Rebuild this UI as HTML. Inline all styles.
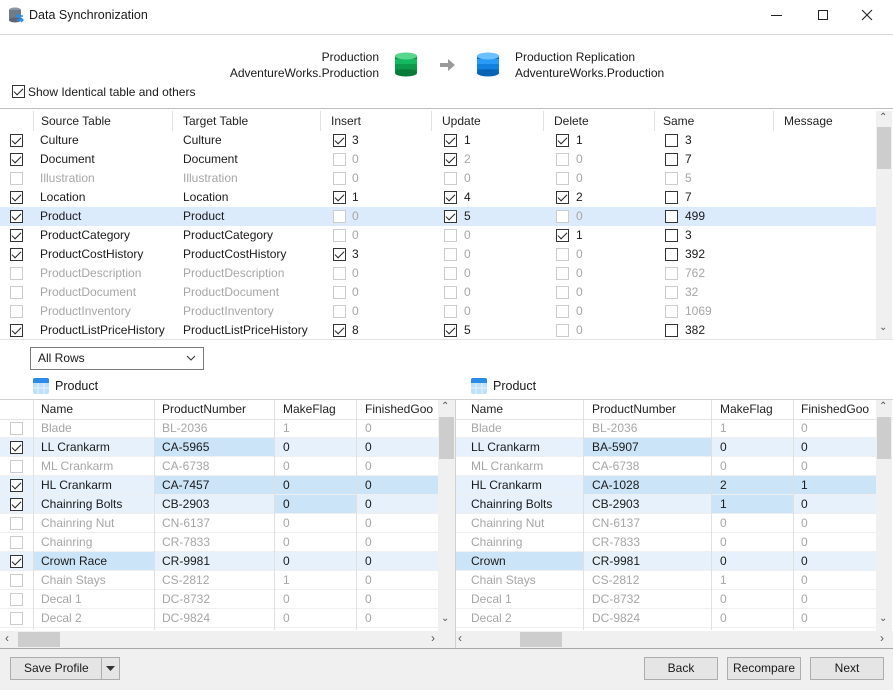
<!DOCTYPE html>
<html><head><meta charset="utf-8"><style>
*{margin:0;padding:0;box-sizing:border-box}
body{width:893px;height:690px;position:relative;overflow:hidden;background:#fff;font:12px "Liberation Sans",sans-serif;color:#1a1a1a}
.a{position:absolute;white-space:nowrap}
.k{position:absolute;width:13px;height:13px;border:1px solid #333;background:#fff;display:block}
.k.g{border-color:#ccc}
.k.c::after{content:"";position:absolute;left:3px;top:0px;width:4px;height:8px;border-right:1px solid #222;border-bottom:1px solid #222;transform:rotate(45deg)}
.row{position:absolute;left:0;height:19px;width:100%}
.row span{position:absolute;top:2px;white-space:nowrap}
.row .k{top:3px}
.gr{color:#a6a6a6}
.hd span{color:#222}
.vs{position:absolute;background:#e0e0e0;width:1px}
.btn{position:absolute;height:23px;border:1px solid #adadad;background:#e5e5e5;text-align:center;line-height:21px}
.hl{position:absolute;height:19px;background:#e6f1fc}
.hd2{position:absolute;height:19px;background:#cce4f7}
.hz{position:absolute;height:1px;background:#efefef}
</style></head><body>
<!-- title bar -->
<svg class="a" style="left:8px;top:7px" width="16" height="16" viewBox="0 0 16 16"><ellipse cx="7" cy="3" rx="6" ry="2.5" fill="#8a96a3"/><rect x="1" y="3" width="12" height="10" fill="#6f7b88"/><ellipse cx="7" cy="13" rx="6" ry="2.5" fill="#5c6773"/><path d="M9 9h6M11 7l-2 2 2 2M15 13H9M13 11l2 2-2 2" stroke="#1e90ff" stroke-width="1.5" fill="none"/></svg>
<div class="a" style="left:29px;top:8px;font-size:12.5px">Data Synchronization</div>
<div class="a" style="left:771px;top:15px;width:11px;height:1px;background:#222"></div>
<div class="a" style="left:818px;top:10px;width:10px;height:10px;border:1px solid #222"></div>
<svg class="a" style="left:861px;top:9px" width="12" height="12"><path d="M1 1L11 11M11 1L1 11" stroke="#222" stroke-width="1.1"/></svg>
<div class="a" style="left:0;top:34px;width:893px;height:1px;background:#d9d9d9"></div>
<!-- header -->
<div class="a" style="left:200px;top:49px;width:179px;text-align:right;line-height:16px">Production<br>AdventureWorks.Production</div>
<svg class="a" style="left:395px;top:52px" width="22" height="25" viewBox="0 0 22 25"><rect x="0" y="4" width="22" height="17" fill="#0a8a43"/><ellipse cx="11" cy="21" rx="11" ry="3.5" fill="#087a3a"/><rect x="0" y="12" width="22" height="5" fill="#0c9a4b"/><rect x="0" y="7" width="22" height="5" fill="#14b85f"/><ellipse cx="11" cy="4" rx="11" ry="3.5" fill="#56d68f"/></svg>
<svg class="a" style="left:440px;top:58px" width="16" height="14"><path d="M0 5h8V1l7 6-7 6V9H0z" fill="#9a9a9a"/></svg>
<svg class="a" style="left:477px;top:52px" width="22" height="25" viewBox="0 0 22 25"><rect x="0" y="4" width="22" height="17" fill="#0b6fc8"/><ellipse cx="11" cy="21" rx="11" ry="3.5" fill="#0a62b4"/><rect x="0" y="12" width="22" height="5" fill="#1281e0"/><rect x="0" y="7" width="22" height="5" fill="#2a9af5"/><ellipse cx="11" cy="4" rx="11" ry="3.5" fill="#6cc0ff"/></svg>
<div class="a" style="left:515px;top:49px;line-height:16px">Production Replication<br>AdventureWorks.Production</div>
<i class="k c" style="left:12px;top:85px"></i>
<div class="a" style="left:28px;top:85px">Show Identical table and others</div>
<!-- upper grid -->
<div class="a" style="left:0;top:108px;width:893px;height:1px;background:#bdbdbd"></div>
<div class="a" style="left:0;top:207px;width:876px;height:19px;background:#dcebfc"></div>
<div class="vs" style="left:33px;top:111px;height:20px"></div>
<div class="vs" style="left:172px;top:111px;height:20px"></div>
<div class="vs" style="left:320px;top:111px;height:20px"></div>
<div class="vs" style="left:431px;top:111px;height:20px"></div>
<div class="vs" style="left:543px;top:111px;height:20px"></div>
<div class="vs" style="left:654px;top:111px;height:20px"></div>
<div class="vs" style="left:773px;top:111px;height:20px"></div>
<div class="row hd" style="top:112px"><span style="left:41px">Source Table</span><span style="left:183px">Target Table</span><span style="left:331px">Insert</span><span style="left:442px">Update</span><span style="left:554px">Delete</span><span style="left:663px">Same</span><span style="left:784px">Message</span></div>
<div class="row" style="top:131px"><i class="k c" style="left:10px"></i><span style="left:40px">Culture</span><span style="left:183px">Culture</span><i class="k c" style="left:333px"></i><span style="left:352px">3</span><i class="k c" style="left:444px"></i><span style="left:464px">1</span><i class="k c" style="left:556px"></i><span style="left:576px">1</span><i class="k" style="left:665px"></i><span style="left:685px">3</span></div>
<div class="row" style="top:150px"><i class="k c" style="left:10px"></i><span style="left:40px">Document</span><span style="left:183px">Document</span><i class="k g" style="left:333px"></i><span class="gr" style="left:352px">0</span><i class="k c" style="left:444px"></i><span class="gr" style="left:464px">2</span><i class="k g" style="left:556px"></i><span class="gr" style="left:576px">0</span><i class="k" style="left:665px"></i><span style="left:685px">7</span></div>
<div class="row gr" style="top:169px"><i class="k g" style="left:10px"></i><span style="left:40px">Illustration</span><span style="left:183px">Illustration</span><i class="k g" style="left:333px"></i><span style="left:352px">0</span><i class="k g" style="left:444px"></i><span style="left:464px">0</span><i class="k g" style="left:556px"></i><span style="left:576px">0</span><i class="k g" style="left:665px"></i><span style="left:685px">5</span></div>
<div class="row" style="top:188px"><i class="k c" style="left:10px"></i><span style="left:40px">Location</span><span style="left:183px">Location</span><i class="k c" style="left:333px"></i><span style="left:352px">1</span><i class="k c" style="left:444px"></i><span style="left:464px">4</span><i class="k c" style="left:556px"></i><span style="left:576px">2</span><i class="k" style="left:665px"></i><span style="left:685px">7</span></div>
<div class="row" style="top:207px"><i class="k c" style="left:10px"></i><span style="left:40px">Product</span><span style="left:183px">Product</span><i class="k g" style="left:333px"></i><span class="gr" style="left:352px">0</span><i class="k c" style="left:444px"></i><span style="left:464px">5</span><i class="k g" style="left:556px"></i><span class="gr" style="left:576px">0</span><i class="k" style="left:665px"></i><span style="left:685px">499</span></div>
<div class="row" style="top:226px"><i class="k c" style="left:10px"></i><span style="left:40px">ProductCategory</span><span style="left:183px">ProductCategory</span><i class="k g" style="left:333px"></i><span class="gr" style="left:352px">0</span><i class="k g" style="left:444px"></i><span class="gr" style="left:464px">0</span><i class="k c" style="left:556px"></i><span style="left:576px">1</span><i class="k" style="left:665px"></i><span style="left:685px">3</span></div>
<div class="row" style="top:245px"><i class="k c" style="left:10px"></i><span style="left:40px">ProductCostHistory</span><span style="left:183px">ProductCostHistory</span><i class="k c" style="left:333px"></i><span style="left:352px">3</span><i class="k g" style="left:444px"></i><span class="gr" style="left:464px">0</span><i class="k g" style="left:556px"></i><span class="gr" style="left:576px">0</span><i class="k" style="left:665px"></i><span style="left:685px">392</span></div>
<div class="row gr" style="top:264px"><i class="k g" style="left:10px"></i><span style="left:40px">ProductDescription</span><span style="left:183px">ProductDescription</span><i class="k g" style="left:333px"></i><span style="left:352px">0</span><i class="k g" style="left:444px"></i><span style="left:464px">0</span><i class="k g" style="left:556px"></i><span style="left:576px">0</span><i class="k g" style="left:665px"></i><span style="left:685px">762</span></div>
<div class="row gr" style="top:283px"><i class="k g" style="left:10px"></i><span style="left:40px">ProductDocument</span><span style="left:183px">ProductDocument</span><i class="k g" style="left:333px"></i><span style="left:352px">0</span><i class="k g" style="left:444px"></i><span style="left:464px">0</span><i class="k g" style="left:556px"></i><span style="left:576px">0</span><i class="k g" style="left:665px"></i><span style="left:685px">32</span></div>
<div class="row gr" style="top:302px"><i class="k g" style="left:10px"></i><span style="left:40px">ProductInventory</span><span style="left:183px">ProductInventory</span><i class="k g" style="left:333px"></i><span style="left:352px">0</span><i class="k g" style="left:444px"></i><span style="left:464px">0</span><i class="k g" style="left:556px"></i><span style="left:576px">0</span><i class="k g" style="left:665px"></i><span style="left:685px">1069</span></div>
<div class="row" style="top:321px"><i class="k c" style="left:10px"></i><span style="left:40px">ProductListPriceHistory</span><span style="left:183px">ProductListPriceHistory</span><i class="k c" style="left:333px"></i><span style="left:352px">8</span><i class="k c" style="left:444px"></i><span style="left:464px">5</span><i class="k g" style="left:556px"></i><span class="gr" style="left:576px">0</span><i class="k" style="left:665px"></i><span style="left:685px">382</span></div>
<div class="a" style="left:876px;top:111px;width:16px;height:228px;background:#f0f0f0"></div>
<div class="a" style="left:877px;top:127px;width:14px;height:42px;background:#cdcdcd"></div>
<div class="a" style="left:879px;top:112px;font-size:10px;color:#555">&#8963;</div>
<div class="a" style="left:879px;top:322px;font-size:10px;color:#555">&#8964;</div>
<div class="a" style="left:0;top:339px;width:893px;height:1px;background:#e3e3e3"></div>
<!-- dropdown -->
<div class="a" style="left:30px;top:347px;width:174px;height:23px;border:1px solid #7a7a7a;padding:3px 0 0 7px">All Rows</div>
<svg class="a" style="left:186px;top:355px" width="10" height="6"><path d="M1 1l4 4 4-4" stroke="#333" fill="none"/></svg>
<!-- product labels -->
<svg class="a" style="left:33px;top:378px" width="16" height="16"><rect width="16" height="16" rx="2" fill="#bfe0fb"/><rect width="16" height="5" rx="2" fill="#2b8be6"/><rect y="3" width="16" height="2" fill="#2b8be6"/><path d="M5 5v11M11 5v11M0 10h16" stroke="#e6f3ff"/></svg>
<div class="a" style="left:55px;top:379px;font-size:12.5px">Product</div>
<svg class="a" style="left:471px;top:378px" width="16" height="16"><rect width="16" height="16" rx="2" fill="#bfe0fb"/><rect width="16" height="5" rx="2" fill="#2b8be6"/><rect y="3" width="16" height="2" fill="#2b8be6"/><path d="M5 5v11M11 5v11M0 10h16" stroke="#e6f3ff"/></svg>
<div class="a" style="left:493px;top:379px;font-size:12.5px">Product</div>
<!-- lower grids frame -->
<div class="a" style="left:0;top:399px;width:893px;height:1px;background:#d0d0d0"></div>
<div class="a" style="left:0;top:419px;width:893px;height:1px;background:#e3e3e3"></div>
<!-- left highlights -->
<div class="hl" style="left:0;top:438px;width:438px"></div>
<div class="hl" style="left:0;top:476px;width:438px"></div>
<div class="hl" style="left:0;top:495px;width:438px"></div>
<div class="hl" style="left:0;top:552px;width:438px"></div>
<div class="hd2" style="left:155px;top:438px;width:119px"></div>
<div class="hd2" style="left:155px;top:476px;width:283px"></div>
<div class="hd2" style="left:275px;top:495px;width:81px"></div>
<div class="hd2" style="left:34px;top:552px;width:120px"></div>
<!-- right highlights -->
<div class="hl" style="left:455px;top:438px;width:421px"></div>
<div class="hl" style="left:455px;top:476px;width:421px"></div>
<div class="hl" style="left:455px;top:495px;width:421px"></div>
<div class="hl" style="left:455px;top:552px;width:421px"></div>
<div class="hd2" style="left:584px;top:438px;width:127px"></div>
<div class="hd2" style="left:584px;top:476px;width:292px"></div>
<div class="hd2" style="left:712px;top:495px;width:81px"></div>
<div class="hd2" style="left:455px;top:552px;width:128px"></div>
<!-- row lines -->
<div class="hz" style="left:0;top:437px;width:876px"></div><div class="hz" style="left:0;top:456px;width:876px"></div><div class="hz" style="left:0;top:475px;width:876px"></div><div class="hz" style="left:0;top:494px;width:876px"></div><div class="hz" style="left:0;top:513px;width:876px"></div><div class="hz" style="left:0;top:532px;width:876px"></div><div class="hz" style="left:0;top:551px;width:876px"></div><div class="hz" style="left:0;top:570px;width:876px"></div><div class="hz" style="left:0;top:589px;width:876px"></div><div class="hz" style="left:0;top:608px;width:876px"></div><div class="hz" style="left:0;top:627px;width:876px"></div>
<!-- col seps -->
<div class="vs" style="left:33px;top:400px;height:230px"></div>
<div class="vs" style="left:154px;top:400px;height:230px"></div>
<div class="vs" style="left:274px;top:400px;height:230px"></div>
<div class="vs" style="left:356px;top:400px;height:230px"></div>
<div class="vs" style="left:583px;top:400px;height:230px"></div>
<div class="vs" style="left:711px;top:400px;height:230px"></div>
<div class="vs" style="left:793px;top:400px;height:230px"></div>
<!-- left grid rows -->
<div class="row hd" style="top:400px"><span style="left:41px">Name</span><span style="left:162px">ProductNumber</span><span style="left:283px">MakeFlag</span><span style="left:365px">FinishedGoo</span></div>
<div class="row gr" style="top:419px"><i class="k g" style="left:10px"></i><span style="left:41px">Blade</span><span style="left:162px">BL-2036</span><span style="left:283px">1</span><span style="left:365px">0</span></div>
<div class="row" style="top:438px"><i class="k c" style="left:10px"></i><span style="left:41px">LL Crankarm</span><span style="left:162px">CA-5965</span><span style="left:283px">0</span><span style="left:365px">0</span></div>
<div class="row gr" style="top:457px"><i class="k g" style="left:10px"></i><span style="left:41px">ML Crankarm</span><span style="left:162px">CA-6738</span><span style="left:283px">0</span><span style="left:365px">0</span></div>
<div class="row" style="top:476px"><i class="k c" style="left:10px"></i><span style="left:41px">HL Crankarm</span><span style="left:162px">CA-7457</span><span style="left:283px">0</span><span style="left:365px">0</span></div>
<div class="row" style="top:495px"><i class="k c" style="left:10px"></i><span style="left:41px">Chainring Bolts</span><span style="left:162px">CB-2903</span><span style="left:283px">0</span><span style="left:365px">0</span></div>
<div class="row gr" style="top:514px"><i class="k g" style="left:10px"></i><span style="left:41px">Chainring Nut</span><span style="left:162px">CN-6137</span><span style="left:283px">0</span><span style="left:365px">0</span></div>
<div class="row gr" style="top:533px"><i class="k g" style="left:10px"></i><span style="left:41px">Chainring</span><span style="left:162px">CR-7833</span><span style="left:283px">0</span><span style="left:365px">0</span></div>
<div class="row" style="top:552px"><i class="k c" style="left:10px"></i><span style="left:41px">Crown Race</span><span style="left:162px">CR-9981</span><span style="left:283px">0</span><span style="left:365px">0</span></div>
<div class="row gr" style="top:571px"><i class="k g" style="left:10px"></i><span style="left:41px">Chain Stays</span><span style="left:162px">CS-2812</span><span style="left:283px">1</span><span style="left:365px">0</span></div>
<div class="row gr" style="top:590px"><i class="k g" style="left:10px"></i><span style="left:41px">Decal 1</span><span style="left:162px">DC-8732</span><span style="left:283px">0</span><span style="left:365px">0</span></div>
<div class="row gr" style="top:609px"><i class="k g" style="left:10px"></i><span style="left:41px">Decal 2</span><span style="left:162px">DC-9824</span><span style="left:283px">0</span><span style="left:365px">0</span></div>
<!-- right grid rows -->
<div class="row hd" style="top:400px"><span style="left:471px">Name</span><span style="left:592px">ProductNumber</span><span style="left:720px">MakeFlag</span><span style="left:801px">FinishedGoo</span></div>
<div class="row gr" style="top:419px"><span style="left:471px">Blade</span><span style="left:592px">BL-2036</span><span style="left:720px">1</span><span style="left:801px">0</span></div>
<div class="row" style="top:438px"><span style="left:471px">LL Crankarm</span><span style="left:592px">BA-5907</span><span style="left:720px">0</span><span style="left:801px">0</span></div>
<div class="row gr" style="top:457px"><span style="left:471px">ML Crankarm</span><span style="left:592px">CA-6738</span><span style="left:720px">0</span><span style="left:801px">0</span></div>
<div class="row" style="top:476px"><span style="left:471px">HL Crankarm</span><span style="left:592px">CA-1028</span><span style="left:720px">2</span><span style="left:801px">1</span></div>
<div class="row" style="top:495px"><span style="left:471px">Chainring Bolts</span><span style="left:592px">CB-2903</span><span style="left:720px">1</span><span style="left:801px">0</span></div>
<div class="row gr" style="top:514px"><span style="left:471px">Chainring Nut</span><span style="left:592px">CN-6137</span><span style="left:720px">0</span><span style="left:801px">0</span></div>
<div class="row gr" style="top:533px"><span style="left:471px">Chainring</span><span style="left:592px">CR-7833</span><span style="left:720px">0</span><span style="left:801px">0</span></div>
<div class="row" style="top:552px"><span style="left:471px">Crown</span><span style="left:592px">CR-9981</span><span style="left:720px">0</span><span style="left:801px">0</span></div>
<div class="row gr" style="top:571px"><span style="left:471px">Chain Stays</span><span style="left:592px">CS-2812</span><span style="left:720px">1</span><span style="left:801px">0</span></div>
<div class="row gr" style="top:590px"><span style="left:471px">Decal 1</span><span style="left:592px">DC-8732</span><span style="left:720px">0</span><span style="left:801px">0</span></div>
<div class="row gr" style="top:609px"><span style="left:471px">Decal 2</span><span style="left:592px">DC-9824</span><span style="left:720px">0</span><span style="left:801px">0</span></div>
<!-- scrollbars: left vertical / right first part -->
<div class="a" style="left:438px;top:400px;width:17px;height:231px;background:#f0f0f0"></div>
<div class="a" style="left:439px;top:417px;width:15px;height:42px;background:#cdcdcd"></div>
<div class="a" style="left:441px;top:401px;font-size:10px;color:#555">&#8963;</div>
<div class="a" style="left:441px;top:613px;font-size:10px;color:#555">&#8964;</div>
<div class="a" style="left:455px;top:400px;width:1px;height:248px;background:#d0d0d0"></div>
<div class="a" style="left:876px;top:400px;width:16px;height:231px;background:#f0f0f0"></div>
<div class="a" style="left:877px;top:417px;width:14px;height:42px;background:#cdcdcd"></div>
<div class="a" style="left:879px;top:401px;font-size:10px;color:#555">&#8963;</div>
<div class="a" style="left:879px;top:613px;font-size:10px;color:#555">&#8964;</div>
<!-- horizontal scrollbars -->
<div class="a" style="left:0;top:631px;width:893px;height:17px;background:#f0f0f0"></div>
<div class="a" style="left:18px;top:632px;width:42px;height:15px;background:#cdcdcd"></div>
<div class="a" style="left:520px;top:632px;width:42px;height:15px;background:#cdcdcd"></div>
<div class="a" style="left:455px;top:631px;width:1px;height:17px;background:#d0d0d0"></div>
<div class="a" style="left:5px;top:631px;font-size:12px;color:#555">&#8249;</div>
<div class="a" style="left:431px;top:631px;font-size:12px;color:#555">&#8250;</div>
<div class="a" style="left:458px;top:631px;font-size:12px;color:#555">&#8249;</div>
<div class="a" style="left:880px;top:631px;font-size:12px;color:#555">&#8250;</div>
<!-- footer -->
<div class="a" style="left:0;top:648px;width:893px;height:42px;background:#f0f0f0;border-top:1px solid #a8a8a8"></div>
<div class="btn" style="left:10px;top:657px;width:110px;text-align:left;padding-left:13px">Save Profile</div>
<div class="a" style="left:101px;top:658px;width:1px;height:21px;background:#adadad"></div>
<svg class="a" style="left:106px;top:666px" width="9" height="5"><path d="M0 0h9L4.5 5z" fill="#333"/></svg>
<div class="btn" style="left:644px;top:657px;width:74px">Back</div>
<div class="btn" style="left:727px;top:657px;width:74px">Recompare</div>
<div class="btn" style="left:810px;top:657px;width:74px">Next</div>
</body></html>
